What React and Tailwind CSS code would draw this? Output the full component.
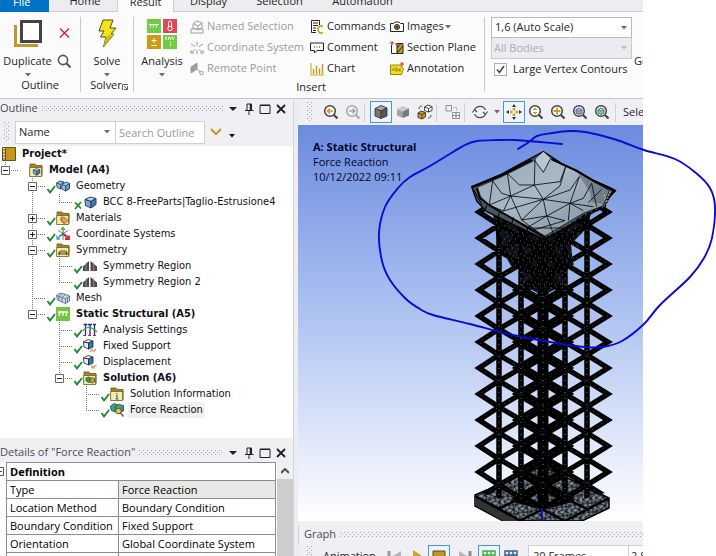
import React, { useState } from "react";

const treeRows = [
  { label: "Project*", icon: "book", guides: "", bold: true },
  { label: "Model (A4)", icon: "model", guides: "L", exp: "-", bold: true },
  { label: "Geometry", icon: "cubes", guides: " T", exp: "-", state: "ok" },
  { label: "BCC 8-FreeParts|Taglio-Estrusione4", icon: "cube", guides: " |L", state: "x" },
  { label: "Materials", icon: "materials", guides: " T", exp: "+", state: "ok" },
  { label: "Coordinate Systems", icon: "axes", guides: " T", exp: "+", state: "ok" },
  { label: "Symmetry", icon: "symFolder", guides: " T", exp: "-", state: "ok" },
  { label: "Symmetry Region", icon: "mirror", guides: " |T", state: "ok" },
  { label: "Symmetry Region 2", icon: "mirror", guides: " |L", state: "ok" },
  { label: "Mesh", icon: "mesh", guides: " T", state: "ok" },
  { label: "Static Structural (A5)", icon: "static", guides: " L", exp: "-", state: "ok", bold: true },
  { label: "Analysis Settings", icon: "settings", guides: "  T", state: "ok" },
  { label: "Fixed Support", icon: "fixed", guides: "  T", state: "ok" },
  { label: "Displacement", icon: "displace", guides: "  T", state: "ok" },
  { label: "Solution (A6)", icon: "solution", guides: "  L", exp: "-", state: "ok", bold: true },
  { label: "Solution Information", icon: "info", guides: "   T", state: "ok" },
  { label: "Force Reaction", icon: "force", guides: "   L", state: "ok", selected: true },
];

const details = [
  ["Type", "Force Reaction"],
  ["Location Method", "Boundary Condition"],
  ["Boundary Condition", "Fixed Support"],
  ["Orientation", "Global Coordinate System"],
  ["Geometry", "All Bodies"],
];

function Cube({ top = "#b9d3ee", left = "#7fa8d6", right = "#4a78ad", line = "#24405f" }) {
  return (
    <g stroke={line} strokeWidth="1" strokeLinejoin="round">
      <path d="M2 4.5 7 2l6 1.5-5 3z" fill={top} />
      <path d="M2 4.5 8 6.5V13L2.500 10.500z" fill={left} />
      <path d="M8 6.500 13 3.500V9.500L8 13z" fill={right} />
    </g>
  );
}

function Folder({ children }) {
  return (
    <>
      <path d="M1 3V1h5l1 1.500h6V5H1z" fill="#a5832a" stroke="#6d551a" strokeWidth=".8" />
      <path d="M.6 4.500h12v9H.6z" fill="#f6eba5" stroke="#7d6a2c" strokeWidth=".9" />
      <path d="M12.600 5 13.600 3.500V12l-1 1.500z" fill="#7d6a2c" />
      {children}
    </>
  );
}

const icons = {
  book: (
    <>
      <path d="M.5.5h3v13h-3z" fill="#f3e6b4" stroke="#5d4a16" />
      <path d="M3.500.5h10v13h-10z" fill="#c8941a" stroke="#6b5014" />
      <path d="M1 3h2M1 6h2M1 9h2M1 12h2" stroke="#5d4a16" />
    </>
  ),
  model: (
    <Folder>
      <g transform="translate(3 4.500) scale(.6)"><Cube line="#1a3550" /></g>
    </Folder>
  ),
  cubes: (
    <g stroke="#2b4664" strokeWidth=".9" strokeLinejoin="round">
      <path d="M.5 4 4 2l4 1v5L4.500 10 1 8z" fill="#9dbde0" />
      <path d="M.5 4 4.500 5.500 8 3M4.500 5.500V10" fill="none" />
      <path d="M6 5.500 10 3l3.500 1.500v5L9.500 12 6 10z" fill="#a9c8e8" />
      <path d="M9.500 7 13.500 4.500v5L9.500 12z" fill="#6d98c8" />
      <path d="M6 5.500 9.500 7" />
    </g>
  ),
  cube: <Cube />,
  materials: (
    <Folder>
      <path d="m5 6 4 .5 3 3-3.500 3.500L5.500 10z" fill="#e0a24f" stroke="#8a5a1d" strokeWidth=".8" />
      <path d="m4 8 4 4" stroke="#8a5a1d" />
    </Folder>
  ),
  axes: (
    <g fill="none" strokeWidth="1.300">
      <path d="M7 7V1M5 3l2-2.500L9 3" stroke="#3cb548" />
      <path d="m7 7 5 4M13 8.500V12h-4" stroke="#d8252b" strokeWidth="1.800" />
      <path d="m7 7-5 4M1 8.500V12h3" stroke="#3d9bd2" />
      <path d="M2 3.500 12 9M12 3.500 3 9M7 7v6" stroke="#555" strokeWidth=".8" />
    </g>
  ),
  symFolder: (
    <Folder>
      <path d="M2.500 12V9.500L4.500 7v5zM5.500 12V7h1v5zM7.500 12V7h1v5zM9.500 12V7l2 2.500V12z" fill="#4e4416" />
    </Folder>
  ),
  mirror: (
    <>
      <path d="M0 12V7.500L6 2v10zM7.500 12V2L14 7.500V12z" fill="#4a4a4a" />
      <path d="M3 3v10M10.800 3v10" stroke="#b5b5b5" strokeWidth=".7" />
    </>
  ),
  mesh: (
    <g stroke="#46617d" strokeWidth=".8" strokeLinejoin="round">
      <path d="M.5 4.500 4 2l4 1 2 .5 3.500 1.500v5L9.500 12.500 6 11 1.500 9z" fill="#cfdcea" />
      <path d="M.5 4.500 6 6.500 9.500 8 13.500 5M6 6.500V11M9.500 8v4.500M3 5.500v4M6 6.500 9.500 3.500M3 5.500 6 2.500M11.500 6.500v4.500" fill="none" />
    </g>
  ),
  static: (
    <>
      <path d="M0 0h14v14H0z" fill="#74c33c" />
      <path d="M2 5h10M4 5 3 9M7.500 5l-1 4M11 5l-1 4" stroke="#fff" strokeWidth="1.300" fill="none" />
    </>
  ),
  settings: (
    <g fill="none">
      <path d="M2.500 1v12M7 1v12M11.500 1v12" stroke="#33267d" strokeWidth="1.300" />
      <path d="M.5 1.500h4M5 1.500h4M10 1.500h3" stroke="#33267d" strokeWidth="1.500" />
      <path d="M0 12.500h14" stroke="#a02d62" strokeDasharray="3 2" />
      <path d="M0 8c3-5 8-5 14 1" stroke="#37a84a" strokeWidth="1.300" />
    </g>
  ),
  fixed: (
    <>
      <g stroke="#222" strokeWidth=".8" strokeLinejoin="round">
        <path d="M.5 3 5 .5 10 2 5.500 4z" fill="#fff" />
        <path d="M.5 3 5.500 4v6L1 8z" fill="#e8eef5" />
        <path d="M5.500 4 10 2v6l-4.500 2z" fill="#2a7bc8" />
      </g>
      <path d="m7 13 3-3m0 3 3-3" stroke="#d09a4a" strokeWidth="1.300" />
    </>
  ),
  displace: (
    <>
      <g stroke="#222" strokeWidth=".8" strokeLinejoin="round">
        <path d="M.5 3 5 .5 10 2 5.500 4z" fill="#fff" />
        <path d="M.5 3 5.500 4v6L1 8z" fill="#e8eef5" />
        <path d="M5.500 4 10 2v6l-4.500 2z" fill="#2a7bc8" />
      </g>
      <path d="m13.500 10-4 2.500M9 10v3h3" stroke="#d09a4a" strokeWidth="1.200" fill="none" />
    </>
  ),
  solution: (
    <Folder>
      <path d="m3 7 3-1 2 1v3l-2 1.500L3 10z" fill="#2f9e6b" stroke="#1c4632" strokeWidth=".7" />
      <path d="m7 8 2.500-1.500 2 1V11l-2 1L7 11z" fill="#d39a2a" stroke="#1c4632" strokeWidth=".7" />
    </Folder>
  ),
  info: (
    <Folder>
      <path d="M6.800 6v1.200M6 8.500h1V12m-1.500 0h3" stroke="#2167a8" strokeWidth="1.100" fill="none" />
    </Folder>
  ),
  force: (
    <>
      <path d="M.5 3 4 .5 8 2v5L4.500 9 1 7z" fill="#33a7a0" stroke="#1a4c66" strokeWidth=".8" />
      <path d="M5 3.500 9 1.500l4.500 1V8L9 10 5 8z" fill="#4fae52" stroke="#244d2a" strokeWidth=".8" />
      <path d="M9 4.500 13 3v5L9 9.500z" fill="#3f7fc4" />
      <circle cx="8.500" cy="8" r="2.800" fill="#f0c94a" stroke="#704f12" />
      <path d="m10.500 10 3 3.500" stroke="#6b4fa0" strokeWidth="1.500" />
    </>
  ),
};

function Grip({ className }) {
  return (
    <svg className={className} aria-hidden="true">
      <defs>
        <pattern id="grip" width="4" height="4" patternUnits="userSpaceOnUse">
          <path d="M0 0h1v1H0zM2 2h1v1H2z" fill="#a3a3a8" />
        </pattern>
      </defs>
      <rect width="100%" height="100%" fill="url(#grip)" />
    </svg>
  );
}

function Caret({ className = "text-[#6b6b6b]" }) {
  return (
    <svg viewBox="0 0 8 4" className={"w-2 h-1 shrink-0 " + className} aria-hidden="true">
      <path d="M1 0h6L4 3.500z" fill="currentColor" />
    </svg>
  );
}

function PanelHeader({ title }) {
  return (
    <header className="flex items-center h-[19px] pr-[6px] text-[#4b4b55]">
      <h2 className="whitespace-nowrap">{title}</h2>
      <Grip className="h-[5px] flex-1 min-w-0 ml-1 mr-1" />
      <div className="flex items-center gap-1 text-[#1e1e24]">
        <button aria-label="Menu" className="w-3">
          <svg viewBox="0 0 12 12" className="size-3"><path d="M2 4h8L6 8z" fill="currentColor" /></svg>
        </button>
        <button aria-label="Pin" className="w-3">
          <svg viewBox="0 0 12 12" className="size-3" fill="none" stroke="currentColor">
            <path d="M4 7V1h4.500v6M2 7.500h8.500M6 8v4" /><path d="M7.500 1v6" strokeWidth="1.500" />
          </svg>
        </button>
        <button aria-label="Maximize" className="w-3">
          <svg viewBox="0 0 12 12" className="size-3" fill="none" stroke="currentColor">
            <path d="M1 2.500h10v8H1z" /><path d="M1 2h10" />
          </svg>
        </button>
        <button aria-label="Close" className="w-3">
          <svg viewBox="0 0 12 12" className="size-3" stroke="currentColor" strokeWidth="1.800"><path d="m2 2 8 8M10 2l-8 8" /></svg>
        </button>
      </div>
    </header>
  );
}

function GuideCell({ kind, exp }) {
  return (
    <span className="grid w-[27px] h-4 place-items-center shrink-0">
      <svg viewBox="0 0 27 16" className="col-start-1 row-start-1 w-[27px] h-4" stroke="#777" strokeDasharray="1 1" aria-hidden="true">
        {(kind === "|" || kind === "T") && <path d="M13.500 0v16" />}
        {kind === "L" && <path d="M13.500 0v8" />}
        {(kind === "T" || kind === "L") && <path d="M13 8.500h14" />}
      </svg>
      {exp && (
        <button aria-label={exp === "-" ? "Collapse" : "Expand"} className="col-start-1 row-start-1">
          <svg viewBox="0 0 9 9" className="size-[9px]" stroke="#222">
            <path d="M.5.5h8v8h-8z" fill="#fff" stroke="#666" />
            <path d={exp === "-" ? "M2 4.500h5" : "M2 4.500h5M4.500 2v5"} />
          </svg>
        </button>
      )}
    </span>
  );
}

function TreeRow({ row }) {
  return (
    <li className="flex items-center h-4">
      {row.guides.split("").map((g, i) => (
        <GuideCell key={i} kind={g} exp={i === row.guides.length - 1 ? row.exp : null} />
      ))}
      <svg viewBox="0 0 10 16" className="w-[10px] h-4 shrink-0 overflow-visible" fill="none" stroke="#16862a" aria-hidden="true">
        {row.state === "ok" && <path d="m1.500 11 2.500 3.500L9 8" strokeWidth="1.800" />}
        {row.state === "x" && <path d="m2 8.500 6 6M8 8l-6 7" strokeWidth="1.700" />}
      </svg>
      <svg viewBox="0 0 14 14" className="size-[14px] shrink-0" aria-hidden="true">{icons[row.icon]}</svg>
      <span
        className={
          "ml-1 px-[2px] leading-4 whitespace-nowrap " +
          (row.bold ? "font-bold " : "") +
          (row.selected ? "bg-[#f0f0f0]" : "")
        }
      >
        {row.label}
      </span>
    </li>
  );
}

function OutlinePanel() {
  return (
    <section className="border-r border-[#d5d5dc]">
      <PanelHeader title="Outline" />
      <div className="flex items-center h-7 pl-1">
        <Grip className="w-[6px] h-5" />
        <div className="flex items-center h-[23px] ml-[5px] border border-[#cfcfd4] bg-white">
          <div className="relative flex items-center w-[99px] h-full">
            <select aria-label="Filter by" className="w-full h-full pl-[3px] appearance-none bg-transparent text-[#1e1e1e]">
              <option>Name</option>
            </select>
            <span className="absolute right-1 pointer-events-none"><Caret /></span>
          </div>
          <input
            type="text"
            aria-label="Search Outline"
            placeholder="Search Outline"
            className="w-[89px] h-full px-[3px] border-l border-[#cfcfd4] placeholder:text-[#9a9a9a]"
          />
        </div>
        <button aria-label="Expand filter" className="ml-[5px]">
          <svg viewBox="0 0 12 8" className="w-3 h-2" fill="none" stroke="#c39a22" strokeWidth="2"><path d="m1 1 5 5 5-5" /></svg>
        </button>
        <button aria-label="Options" className="mt-2 ml-[6px]"><Caret className="text-[#111]" /></button>
      </div>
      <div className="pb-5 overflow-hidden bg-white font-['DejaVu_Sans_Condensed','Noto_Sans',sans-serif] text-[#101018]">
        <ul className="-ml-2">
          {treeRows.map((row) => (
            <TreeRow key={row.label} row={row} />
          ))}
        </ul>
      </div>
    </section>
  );
}

function DetailsPanel() {
  return (
    <section className="flex-1 min-h-0 pt-[5px] overflow-hidden border-r border-[#d5d5dc]">
      <PanelHeader title={'Details of "Force Reaction"'} />
      <div className="flex bg-white">
        <div className="w-[6px] shrink-0 pt-[5px] overflow-hidden">
          <svg viewBox="0 0 9 9" className="size-[9px] -ml-[5px]"><path d="M.5.5h8v8h-8zM2 4.500h5" fill="none" stroke="#555" /></svg>
        </div>
        <table className="flex-1 border-collapse text-black">
          <thead>
            <tr className="h-[18px]">
              <th colSpan="2" className="px-[3px] py-0 leading-4 font-bold text-left border border-[#8c8c8c]">Definition</th>
            </tr>
          </thead>
          <tbody>
            {details.map(([name, value], i) => (
              <tr key={name} className="h-[18px]">
                <td className="w-28 px-[3px] py-0 leading-4 whitespace-nowrap border border-[#8c8c8c]">{name}</td>
                <td className={"px-[3px] py-0 leading-4 whitespace-nowrap border border-[#8c8c8c] " + (i === 0 ? "bg-[#e9e8e6]" : "")}>{value}</td>
              </tr>
            ))}
          </tbody>
        </table>
        <div className="w-4 ml-px bg-[#cdcdcd]">
          <button aria-label="Scroll up" className="flex items-center justify-center w-full h-[17px] bg-[#f0f0f0]">
            <svg viewBox="0 0 8 6" className="w-2 h-[6px]" fill="none" stroke="#505050" strokeWidth="2"><path d="m0 5 4-4 4 4" /></svg>
          </button>
        </div>
      </div>
    </section>
  );
}

function InsertItem({ children, label, disabled, caret }) {
  return (
    <button disabled={disabled} className={"flex items-center h-[21px] whitespace-nowrap " + (disabled ? "text-[#9c9c9c]" : "text-[#262626]")}>
      <svg viewBox="0 0 14 14" className="size-[14px] mr-[3px] shrink-0" fill="none" stroke="currentColor" aria-hidden="true">
        {children}
      </svg>
      {label}
      {caret && <Caret />}
    </button>
  );
}

function Tabs() {
  const tab = "flex items-end justify-center h-3 pb-[2px] leading-4 border-b border-[#cdcdd2] ";
  return (
    <nav className="flex h-3 bg-[#ececf1]">
      <button className="flex items-end h-3 w-[49px] pb-[2px] pl-[13px] leading-4 text-white bg-[#0072c6]">File</button>
      <button className={tab + "w-[68px] pl-1"}>Home</button>
      <button className="flex items-end justify-center h-3 w-[57px] pb-[2px] leading-4 bg-[#fbfbfc] border-x border-[#cdcdd2]">Result</button>
      <button className={tab + "w-[69px]"}>Display</button>
      <button className={tab + "w-[73px]"}>Selection</button>
      <button className={tab + "w-[93px]"}>Automation</button>
      <div className="flex-1 border-b border-[#cdcdd2]" />
    </nav>
  );
}

function Ribbon() {
  const [large, setLarge] = useState(true);
  return (
    <div className="flex h-[87px] pt-[5px] bg-[#fbfbfc] border-b border-[#c4c4c9] overflow-hidden whitespace-nowrap">
      <div className="flex flex-col w-[81px] h-[75px] shrink-0 border-r border-[#c8c8cc]">
        <div className="flex h-[62px]">
          <button className="flex flex-col items-center w-[55px]">
            <svg viewBox="0 0 30 30" className="size-[30px] mt-[2px]" fill="none" aria-hidden="true">
              <path d="M2.500 6v20.500H25" stroke="#c2982c" strokeWidth="3" />
              <path d="M8.500 2.500h19v20h-19z" fill="#fff" stroke="#444" strokeWidth="3" />
            </svg>
            <span className="mt-1 leading-4">Duplicate</span>
            <span className="mt-1"><Caret /></span>
          </button>
          <div className="flex flex-col items-center pt-[11px] pl-[2px] gap-4">
            <button aria-label="Delete">
              <svg viewBox="0 0 14 10" className="w-[14px] h-[10px]" stroke="#d5202c" strokeWidth="1.400"><path d="m3 .5 9 9M12 .5l-9 9" /></svg>
            </button>
            <button aria-label="Find">
              <svg viewBox="0 0 14 14" className="size-[14px]" fill="none" stroke="#555" strokeWidth="1.600">
                <circle cx="6" cy="6" r="4.600" /><path d="m9.300 9.300 4.200 4.200" strokeWidth="2" />
              </svg>
            </button>
          </div>
        </div>
        <span className="text-center leading-4">Outline</span>
      </div>

      <div className="flex flex-col items-center w-[53px] h-[75px] shrink-0 border-r border-[#c8c8cc]">
        <button className="flex flex-col items-center h-[62px]">
          <svg viewBox="0 0 20 30" className="w-5 h-[30px] mt-[2px]" aria-hidden="true">
            <path d="M6 1h10l-3 8h6L14 15h3L6.500 28 9 18H3.500L7 12H2z" fill="#f5e31c" stroke="#4f4a20" strokeLinejoin="round" />
            <path d="m9 18 5-3h3L6.500 28z" fill="#cfc018" />
          </svg>
          <span className="mt-1 leading-4">Solve</span>
          <span className="mt-1"><Caret /></span>
        </button>
        <div className="flex items-center pl-1 leading-4">
          Solver
          <svg viewBox="0 0 6 6" className="size-[6px] mt-1" stroke="#666" fill="none"><path d="M.5 6V.5H6M2 2l3 3M5.500 2v3.500H2" /></svg>
        </div>
      </div>

      <div className="flex flex-col w-[351px] h-[75px] shrink-0 border-r border-[#c8c8cc]">
        <div className="flex h-[62px]">
          <button className="flex flex-col items-center w-[56px] h-[62px]">
            <svg viewBox="0 0 30 30" className="size-[30px] mt-[2px]" aria-hidden="true">
              <path d="M0 0h14v14H0z" fill="#70cc45" />
              <path d="M16 0h14v14H16z" fill="#dc4b55" />
              <path d="M0 16h14v14H0z" fill="#cc9a13" />
              <path d="M16 16h14v14H16z" fill="#70cc45" />
              <g fill="none" stroke="#fff">
                <path d="M2 5.500h10M4 6 3 8.500M7 6 6 8.500M10 6 9 8.500" />
                <path d="M21.500 8V3.500a1.500 1.500 0 0 1 3 0V8" />
                <circle cx="23" cy="9.500" r="2.200" />
                <path d="M7 19v5M4.500 21.500h5M4.500 26.500h5" />
                <path d="M18 18.500h10M19 19v3M21.500 19v3M23.500 19v8M26 19v3" strokeDasharray="2 1" />
              </g>
            </svg>
            <span className="mt-1 leading-4">Analysis</span>
            <span className="mt-1"><Caret /></span>
          </button>
          <div className="flex flex-col w-[120px] -mt-px">
            <InsertItem label="Named Selection" disabled>
              <path d="M1 9v4h12V9zM3 9V4l4-3 5 2v5L8 10 4 8M4 4l4 2 4-3M8 6v4" />
            </InsertItem>
            <InsertItem label="Coordinate System" disabled>
              <path d="M7 1v4M7 9v4M1 3l4 2.500M13 3 9 5.500M1 12l4-3.500M13 12 9 8.500M1 9v3h3M13 9v3h-3" />
            </InsertItem>
            <InsertItem label="Remote Point" disabled>
              <path d="m1 5 6-4v6l-6 4z" fill="#9c9c9c" /><path d="m7 7 3 3" /><circle cx="11.500" cy="11" r="1.800" />
            </InsertItem>
          </div>
          <div className="flex flex-col w-20 -mt-px">
            <InsertItem label="Commands">
              <path d="M1.500.5h8V5M1.500.5v12H6M3 3h5M3 5.500h5M3 8h3M3 10.500h3" />
              <path d="M13 6.500c-3.500-1.500-5 .5-5 3s2 4.500 5 3" stroke="#d2a41f" strokeWidth="1.800" />
            </InsertItem>
            <InsertItem label="Comment"><path d="M.5 2h13v7.500H7L4.500 12V9.500h-4zM4 6h1M6.500 6h1M9 6h1" /></InsertItem>
            <InsertItem label="Chart">
              <path d="M1 1v12h13" stroke="#d2a41f" /><path d="M3.500 12V7M6.500 12V4M9.500 12V6.500M12.500 12V2" stroke="#c9981c" strokeWidth="1.400" />
            </InsertItem>
          </div>
          <div className="flex flex-col -mt-px">
            <InsertItem label="Images" caret>
              <path d="M.5 3.500h3L5 2h4l1.500 1.500h3v8H.5z" /><circle cx="7" cy="7" r="2.500" fill="#c9981c" /><circle cx="7" cy="7" r="1" />
            </InsertItem>
            <InsertItem label="Section Plane">
              <path d="M1.500 4v8.500H7" /><path d="M7 2.500h6v10H7z" fill="#c9981c" /><path d="m7 12 6-7M7 7l4-4.500" /><path d="M2 0v4M0 2h4" stroke="#d22" /><path d="M5 3h2" stroke="#d22" />
            </InsertItem>
            <InsertItem label="Annotation">
              <path d="M.5 3h10l3 4-2 5.500H.5z" fill="#f2dc18" stroke="#9b8412" /><path d="m2 9 1.500-3L5 9M6 5v4h2V7H6M11 7H9.500v2H11" stroke="#a08a14" /><path d="M12 0v4M10 2h4" stroke="#d22" />
            </InsertItem>
          </div>
        </div>
        <span className="pl-1 text-center leading-4">Insert</span>
      </div>

      <div className="w-[141px] ml-[6px] shrink-0">
        <div className="relative flex items-center h-[21px] border border-[#b9b9be] bg-white">
          <select aria-label="Scale" className="w-full h-full pl-[3px] appearance-none bg-transparent text-[#262626]">
            <option>1,6 (Auto Scale)</option>
          </select>
          <span className="absolute right-[3px] pointer-events-none"><Caret /></span>
        </div>
        <div className="relative flex items-center h-[21px] border border-[#c9c9cf] border-t-0 bg-[#ececf0]">
          <select disabled aria-label="Bodies" className="w-full h-full pl-[2px] appearance-none bg-transparent text-[#ababb0] opacity-100">
            <option>All Bodies</option>
          </select>
          <span className="absolute right-[3px] pointer-events-none"><Caret className="text-[#b8b8bd]" /></span>
        </div>
        <label className="flex items-center h-5 gap-[6px] pl-[3px]">
          <span className="grid place-items-center">
            <input
              type="checkbox"
              checked={large}
              onChange={() => setLarge(!large)}
              className="col-start-1 row-start-1 appearance-none size-[13px] border border-[#b0b0b4] bg-white"
            />
            {large && (
              <svg viewBox="0 0 9 9" className="col-start-1 row-start-1 size-[9px] pointer-events-none" fill="none" stroke="#444" strokeWidth="1.600"><path d="m1 4.500 2.500 3L8 1" /></svg>
            )}
          </span>
          Large Vertex Contours
        </label>
      </div>
      <button className="self-start mt-9 ml-[2px] leading-4">Geometry</button>
    </div>
  );
}

function ToolButton({ label, active, children, className = "" }) {
  return (
    <button
      aria-label={label}
      className={"flex items-center justify-center w-[22px] h-[22px] shrink-0 border " + (active ? "border-[#4c94d8] bg-[#eef4fb] " : "border-transparent ") + className}
    >
      <svg viewBox="0 0 16 16" className="size-4" fill="none" stroke="#444">{children}</svg>
    </button>
  );
}

function Magnifier({ fill, tone = "#444", children }) {
  return (
    <>
      <circle cx="7" cy="7" r="5.300" fill={fill} stroke={tone} strokeWidth="1.500" />
      <path d="m11 11 3.500 3.500" stroke={tone} strokeWidth="2.200" />
      {children}
    </>
  );
}

function Divider() {
  return <span className="block w-px h-[19px] shrink-0 bg-[#cfcfd5]" />;
}

function GraphicsToolbar() {
  return (
    <div className="flex items-center h-[26px] pl-[9px] bg-[#f0f0f4] overflow-hidden whitespace-nowrap">
      <Grip className="w-[6px] h-5 shrink-0" />
      <ToolButton label="Previous view" className="ml-[7px]">
        <Magnifier fill="#fff"><path d="M10 7H4.500M7 4.500 4.500 7 7 9.500" stroke="#d09a1c" strokeWidth="1.700" /></Magnifier>
      </ToolButton>
      <ToolButton label="Next view">
        <Magnifier fill="#f4f4f6" tone="#a4a4a8"><path d="M4 7h5.500M7.500 4.500 10 7 7.500 9.500" stroke="#a4a4a8" strokeWidth="1.300" /></Magnifier>
      </ToolButton>
      <Divider />
      <ToolButton label="Shaded with edges" active className="ml-[5px]">
        <path d="m2 4.500 6-3 6 2.500-6 3z" fill="#a8a8aa" /><path d="M2 4.500 8 7v7.500L2 12z" fill="#77777a" /><path d="m8 7 6-3v8l-6 2.500z" fill="#555558" />
      </ToolButton>
      <ToolButton label="Shaded">
        <g stroke="none"><path d="m2 5 6-3 6 2.500-6 3z" fill="#c9c9cb" /><path d="M2 5 8 7.500V14L2 11.500z" fill="#a2a2a5" /><path d="m8 7.500 6-3v7L8 14z" fill="#77777a" /></g>
      </ToolButton>
      <ToolButton label="Wireframe">
        <path d="m7.500 3 3.500-2 4 1.500v4L11.500 8l-4-1.500zM7.500 3 11.500 4.500 15 2.500M11.500 4.500V8" fill="#fff" />
        <path d="m1 9 3-2 4.500 1.500v4.500L5 15l-4-1.500z" fill="#c89b25" /><path d="m1 9 4 1.500 3.500-2M5 10.500v4.500" />
        <path d="M2 5c0-2 1-3 3-3M11 14c2 0 3-1 3-3" />
      </ToolButton>
      <Divider />
      <ToolButton label="Show mesh" className="ml-[5px]">
        <g stroke="#8f8f94"><path d="M1 1.500h5.500V7H1zM7.500 8.500h7v6h-7zM11 8.500v6M7.500 11.500h7" /><path d="M8.500 3.500h3V7" strokeDasharray="1 1" /></g>
      </ToolButton>
      <Divider />
      <ToolButton label="Rotate" className="ml-1">
        <path d="M2.500 6a6 6 0 0 1 11 0M13.500 10a6 6 0 0 1-11 0M.5 8.500 2.500 5.500 5 8M15.500 7.500l-2 3L11 8" strokeWidth="1.100" />
      </ToolButton>
      <span className="ml-[2px]"><Caret /></span>
      <ToolButton label="Pan" active className="ml-[2px]">
        <path d="M8 0 6 3h4zM8 16l-2-3h4zM0 8l3-2v4zM16 8l-3-2v4z" fill="#333" stroke="none" />
        <path d="M8 4v2.500M8 9.500V12M4 8h2.500M9.500 8H12" stroke="#d2a41f" strokeWidth="2.400" />
      </ToolButton>
      <ToolButton label="Zoom out">
        <Magnifier fill="#fff"><path d="M4.500 6 7 3.500 9.500 6zM4.500 8 7 10.500 9.500 8z" fill="#d09a1c" stroke="none" /></Magnifier>
      </ToolButton>
      <ToolButton label="Zoom in">
        <Magnifier fill="#fff"><path d="M7 3.500v7M3.500 7h7" stroke="#d09a1c" strokeWidth="1.800" /></Magnifier>
      </ToolButton>
      <ToolButton label="Zoom to box">
        <Magnifier fill="#fff"><path d="m4 5.500 3-1.500 3 1.500V9l-3 1.500L4 9zM4 5.500 7 7l3-1.500" fill="#8fa6cb" stroke="#556788" /></Magnifier>
      </ToolButton>
      <ToolButton label="Zoom to fit">
        <Magnifier fill="#fff"><path d="m4 5.500 3-1.500 3 1.500V9l-3 1.500L4 9zM4 5.500 7 7l3-1.500" fill="#8fc2a5" stroke="#3f8060" /></Magnifier>
      </ToolButton>
      <span className="ml-[2px] mr-[7px]"><Divider /></span>
      <button>Select</button>
    </div>
  );
}

const levels = Array.from({ length: 12 }, (_, i) => 212 + i * 26);
const posts = [499, 521, 543, 565, 587];
// one zigzag per bay: tips on x0, valleys on x1
const zigzag = (x0, x1) =>
  `M${x1} 199` + levels.map((y) => `L${x0} ${y}L${x1} ${y + 13}`).join("");
const outerBays = [zigzag(479, 499), zigzag(521, 499), zigzag(565, 587), zigzag(608, 587)].join("");
const innerBays = [zigzag(521, 543), zigzag(565, 543)].join("");

const plateMesh =
  "M255 85l-2 80M253 90l27 37 22-42M253 165l27 43 10 50 55 14M172 130l36 35 45 0M172 130l10 68 71-33 77-10 17-45M182 198l98 10 50-40 17-58M280 208l80 12 28-80M360 220l70 10M425 160l-25 45-40 15M425 160l15 70M128 152l27 38 27 8M128 152l-10 73 64-27M118 225l42 18 120-35M160 243l22-45 33 72 65-62M215 270l75-12M215 270l70 52M290 258l70-38M290 258l-60 36M290 258l20 52M360 220l-5 52M360 220l40 22M230 294h115M250 300l95-28M388 140l-28 40-80 28M455 178l-40 40";

const loopPoints = [
  [562, 144], [540, 142], [515, 140], [497, 140], [477, 141], [465, 145], [453, 152],
  [430, 166], [410, 177], [398, 188], [385, 207], [379, 233], [382, 261], [390, 280],
  [406, 299], [420, 309], [433, 315], [470, 324], [513, 335], [556, 343], [585, 347],
  [603, 347], [622, 341], [644, 324], [660, 305], [690, 277], [704, 258], [712, 238],
  [715, 207], [710, 188], [696, 173], [675, 159], [644, 150], [620, 141], [603, 136],
  [585, 132], [570, 131], [552, 133], [537, 136], [529, 142], [518, 149],
];

// Catmull-Rom spline through the points
const smooth = (pts) =>
  pts.slice(0, -1).reduce((d, p1, i) => {
    const p0 = pts[i - 1] || p1;
    const p2 = pts[i + 1];
    const p3 = pts[i + 2] || p2;
    const c1 = [p1[0] + (p2[0] - p0[0]) / 6, p1[1] + (p2[1] - p0[1]) / 6];
    const c2 = [p2[0] - (p3[0] - p1[0]) / 6, p2[1] - (p3[1] - p1[1]) / 6];
    return d + `C${c1} ${c2} ${p2}`;
  }, `M${pts[0]}`);

function ModelView() {
  return (
    <svg viewBox="298 125 418 396" className="absolute top-0 left-0 w-[418px] h-[396px] pointer-events-none" fill="none" role="img" aria-label="Deformed lattice column">
      <defs>
        <linearGradient id="steel" x1="0" y1="0" x2="1" y2="1">
          <stop offset="0" stopColor="#8fa4b4" />
          <stop offset=".45" stopColor="#a9b8c5" />
          <stop offset=".8" stopColor="#8c9dab" />
          <stop offset="1" stopColor="#6d7d8c" />
        </linearGradient>
        <clipPath id="tower"><path d="M470 205h146v285l-73 20-73-20z" /></clipPath>
        <pattern id="specks" width="11" height="13" patternUnits="userSpaceOnUse">
          <path d="M1 2h1M6 1h1M9 5h1M3 7h1M7 9h1M1 11h1M5 12h1M10 11h1" stroke="#8c9aaa" strokeWidth=".6" />
        </pattern>
        <pattern id="facets" width="13" height="9" patternUnits="userSpaceOnUse" patternTransform="rotate(-8)">
          <path d="M0 0l5 3 3-3 5 4-4 5-4-2-5 2zM5 3v4M9 0v9M0 4h5l8 1" stroke="#000" strokeWidth=".9" />
        </pattern>
      </defs>

      <path d="M475 495l68-29 66 32v10l-27 13h-79l-28-15z" fill="#7d8795" />
      <path d="M475 495l68-29 66 32v10l-27 13h-79l-28-15z" fill="url(#facets)" stroke="#000" strokeWidth="1.500" />
      <path d="M475 495v10l28 16h18z" fill="#333" />
      <path d="M475 496l46 25M609 498l-44 23M497 486l68 35M587 487l-68 34M520 476l67 33M565 476l-67 33" stroke="#000" strokeWidth="2.500" />

      <g clipPath="url(#tower)" stroke="#000" strokeLinejoin="miter">
        <path d={outerBays} strokeWidth="5.200" />
        <path d={innerBays} strokeWidth="9.500" />
        <path d={posts.map((x) => `M${x} 215V505`).join("")} strokeWidth="5.500" />
        <path d="M543 225V505" strokeWidth="11" />
        <path d={outerBays + innerBays} stroke="#7d8a9b" strokeWidth=".5" strokeDasharray="1 5" />
        <path d={posts.map((x) => `M${x} 230V500`).join("")} stroke="#a5b0bf" strokeWidth=".7" strokeDasharray="1 5" />
      </g>
      {/* crushed cells right under the plate */}
      <path d="M492 208l53 28 46-22-6 16-14 14 2 20-8 6-4 16-18 10-18-10-4-16-10-4-14-26z" fill="#000" fillOpacity=".9" />
      <path d="M494 215l51 24 42-18-15 62-28 16-22-10-20-34z" fill="url(#specks)" />
      <path d="M542 508v13" stroke="#1414a8" strokeWidth="2" />

      <g transform="translate(450 130) scale(.3333)" stroke="#000" strokeLinejoin="round">
        <path d="M65 170 80 213 110 245 285 329 435 244 465 232 477 200 497 182 480 173 375 126 280 65 155 132z" fill="#4c555e" strokeWidth="4" />
        <path d="M280 65 303 87 380 125 430 155 478 182 458 228 400 250 285 318 190 265 118 225 92 200 82 172 155 140 250 93z" fill="url(#steel)" strokeWidth="2" />
        <path d="M280 65 253 90l27 37 22-42z" fill="#b6c6d2" stroke="none" />
        <path d="m380 125 50 30 45 27-18 40-32-5-5-30z" fill="#56616c" fillOpacity=".55" stroke="none" />
        <path d="m65 172 90-36 90-46M305 88l75 34 50 30 62 30-25 35" strokeWidth="6" />
        <path d="m80 175 10 30 30 22 165 96" strokeWidth="5" />
        <path d="m68 175 28 50M110 225l-5 18M150 240l-6 22M190 262l-5 20M235 288l-4 15" strokeWidth="3" />
        <path d="m285 325 60-30 60-40 50-22" strokeWidth="6" strokeDasharray="14 4" />
        <path d={plateMesh} strokeWidth="2.400" />
        <path d="m463 195 8 30M480 185l-10 30" stroke="#c9c48a" strokeWidth="4" strokeDasharray="4 5" />
      </g>

      <path d={smooth(loopPoints)} stroke="#0a0ad2" strokeWidth="1.900" strokeLinecap="round" />
    </svg>
  );
}

function Viewport() {
  return (
    <div className="relative flex-1 min-h-0 bg-linear-to-b from-[#6b8bdf] to-white">
      <div className="pt-[14px] pl-[15px] leading-[15px] text-[#04042a]">
        <p className="font-bold">A: Static Structural</p>
        <p>Force Reaction</p>
        <p>10/12/2022 09:11</p>
      </div>
      <ModelView />
    </div>
  );
}

function GraphPanel() {
  return (
    <section className="pt-1 bg-[#f0f0f4] whitespace-nowrap">
      <header className="flex items-center h-[19px] pl-[5px] border-l border-[#d0d0d6] text-[#4b4b55]">
        <h2>Graph</h2>
        <Grip className="flex-1 h-[5px] ml-1" />
      </header>
      <div className="h-3 overflow-hidden">
        <div className="flex items-center h-6 pl-[9px]">
          <Grip className="w-[6px] h-5 shrink-0" />
          <span className="ml-[10px] w-[61px] shrink-0">Animation</span>
          <ToolButton label="First frame"><path d="M2 3v10" strokeWidth="3" stroke="#9b9b9f" /><path d="M14 3v10L6 8z" fill="#b5b5ba" stroke="none" /></ToolButton>
          <ToolButton label="Play"><path d="M4 2v12l9-6z" fill="#d2a41f" stroke="none" /></ToolButton>
          <ToolButton label="Stop" active><path d="M2 3h12v11H2z" fill="#c2952a" stroke="#5e4813" /></ToolButton>
          <ToolButton label="Last frame" className="ml-1"><path d="M2 3v10l8-5z" fill="#b5b5ba" stroke="none" /><path d="M13 3v10" strokeWidth="3" stroke="#8b8b8f" /></ToolButton>
          <ToolButton label="Distributed" active className="ml-[2px]"><path d="M2 3h12v10H2zM6 3v10M10 3v10M2 7h12" stroke="#3cb043" strokeWidth="1.500" /></ToolButton>
          <ToolButton label="Result sets"><path d="M2 3h12v10H2zM6 3v10M10 3v10M2 7h12" stroke="#35608f" strokeWidth="1.500" /></ToolButton>
          <select aria-label="Frames" className="w-[101px] h-[22px] ml-[6px] pl-1 shrink-0 appearance-none border border-[#cfcfd4] bg-white">
            <option>20 Frames</option>
          </select>
          <select aria-label="Duration" className="w-20 h-[22px] pl-[2px] shrink-0 appearance-none border border-[#cfcfd4] border-l-0 bg-white">
            <option>2 Sec (Auto)</option>
          </select>
        </div>
      </div>
    </section>
  );
}

export default function App() {
  return (
    <div className="h-screen pr-[73px] overflow-hidden bg-white font-['Open_Sans',sans-serif] text-[11px] text-[#262626]">
      <main className="flex flex-col h-full bg-[#ececf1]">
        <Tabs />
        <Ribbon />
        <div className="flex flex-1 min-h-0">
          <aside className="flex flex-col w-[294px] shrink-0 bg-[#f0f0f4]">
            <OutlinePanel />
            <DetailsPanel />
          </aside>
          <div className="flex flex-col flex-1 min-w-0 ml-1">
            <GraphicsToolbar />
            <Viewport />
            <GraphPanel />
          </div>
        </div>
      </main>
    </div>
  );
}
